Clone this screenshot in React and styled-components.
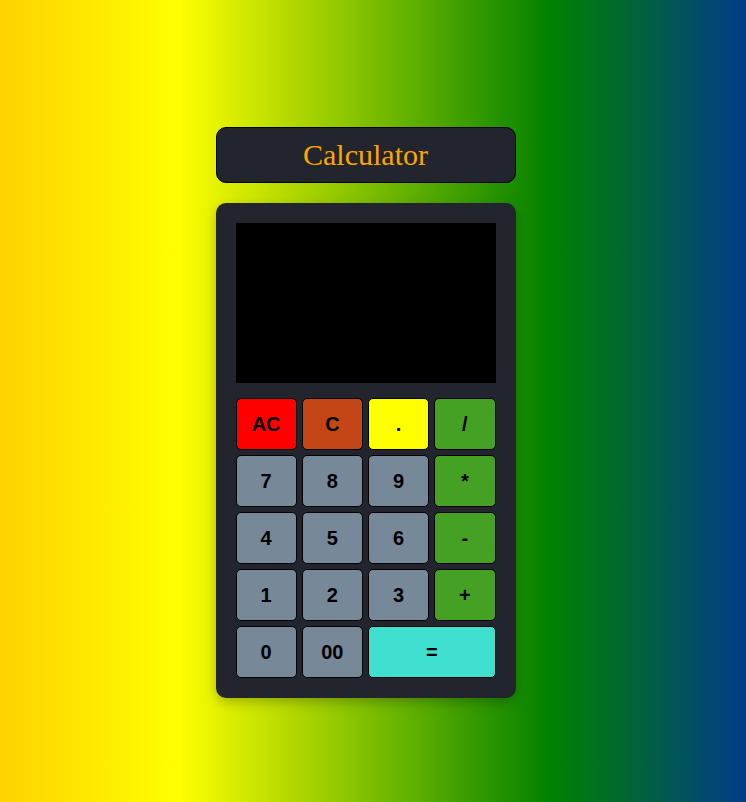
import React, { useState } from "react";
import styled, { createGlobalStyle } from "styled-components";

const GlobalStyle = createGlobalStyle`
  html, body {
    margin: 0;
    padding: 0;
  }
  body {
    min-height: 100vh;
    background: linear-gradient(90deg, #ffd200 0%, #ffff00 24%, #008000 74%, #013c87 100%);
    font-family: "Liberation Sans", Arial, sans-serif;
  }
`;

const Page = styled.div`
  min-height: 100vh;
  box-sizing: border-box;
  padding: 127px 15px 0 0;
  display: flex;
  flex-direction: column;
  align-items: center;
  gap: 20px;
`;

const Title = styled.h1`
  margin: 0;
  width: 300px;
  height: 56px;
  box-sizing: border-box;
  display: flex;
  align-items: center;
  justify-content: center;
  background: #22252d;
  border: 1px solid #000;
  border-radius: 10px;
  color: #ffa500;
  font-family: "Liberation Serif", "Times New Roman", serif;
  font-weight: 400;
  font-size: 30px;
`;

const Body = styled.div`
  width: 300px;
  box-sizing: border-box;
  padding: 20px;
  background: #22252d;
  border-radius: 10px;
  box-shadow: 0 4px 12px rgba(0, 0, 0, 0.25);
  display: flex;
  flex-direction: column;
  gap: 15px;
`;

const Display = styled.div`
  height: 160px;
  background: #000;
  color: #fff;
  font-size: 32px;
  display: flex;
  align-items: flex-end;
  justify-content: flex-end;
  padding: 10px;
  box-sizing: border-box;
  overflow: hidden;
`;

const Keys = styled.div`
  display: grid;
  grid-template-columns: repeat(4, 1fr);
  grid-auto-rows: 52px;
  gap: 5px;
`;

const Key = styled.button`
  grid-column: span ${(p) => p.span || 1};
  background: ${(p) => p.bg};
  border: 1px solid #000;
  border-radius: 5px;
  color: #000;
  font-family: "Liberation Sans", Arial, sans-serif;
  font-weight: 700;
  font-size: 20px;
  padding: 0;
  cursor: pointer;
`;

const GRAY = "#778899";
const GREEN = "#45a124";

const keys = [
  { label: "AC", bg: "#ff0000" },
  { label: "C", bg: "#c44516" },
  { label: ".", bg: "#ffff00" },
  { label: "/", bg: GREEN },
  { label: "7", bg: GRAY },
  { label: "8", bg: GRAY },
  { label: "9", bg: GRAY },
  { label: "*", bg: GREEN },
  { label: "4", bg: GRAY },
  { label: "5", bg: GRAY },
  { label: "6", bg: GRAY },
  { label: "-", bg: GREEN },
  { label: "1", bg: GRAY },
  { label: "2", bg: GRAY },
  { label: "3", bg: GRAY },
  { label: "+", bg: GREEN },
  { label: "0", bg: GRAY },
  { label: "00", bg: GRAY },
  { label: "=", bg: "#40e0d0", span: 2 },
];

export default function App() {
  const [value, setValue] = useState("");

  const press = (k) => {
    if (k === "AC") return setValue("");
    if (k === "C") return setValue((v) => v.slice(0, -1));
    if (k === "=") {
      try {
        // eslint-disable-next-line no-new-func
        setValue(String(Function(`return (${value})`)()));
      } catch (e) {
        setValue("Error");
      }
      return;
    }
    setValue((v) => v + k);
  };

  return (
    <>
      <GlobalStyle />
      <Page>
        <Title>Calculator</Title>
        <Body>
          <Display>{value}</Display>
          <Keys>
            {keys.map((k) => (
              <Key key={k.label} bg={k.bg} span={k.span} onClick={() => press(k.label)}>
                {k.label}
              </Key>
            ))}
          </Keys>
        </Body>
      </Page>
    </>
  );
}
